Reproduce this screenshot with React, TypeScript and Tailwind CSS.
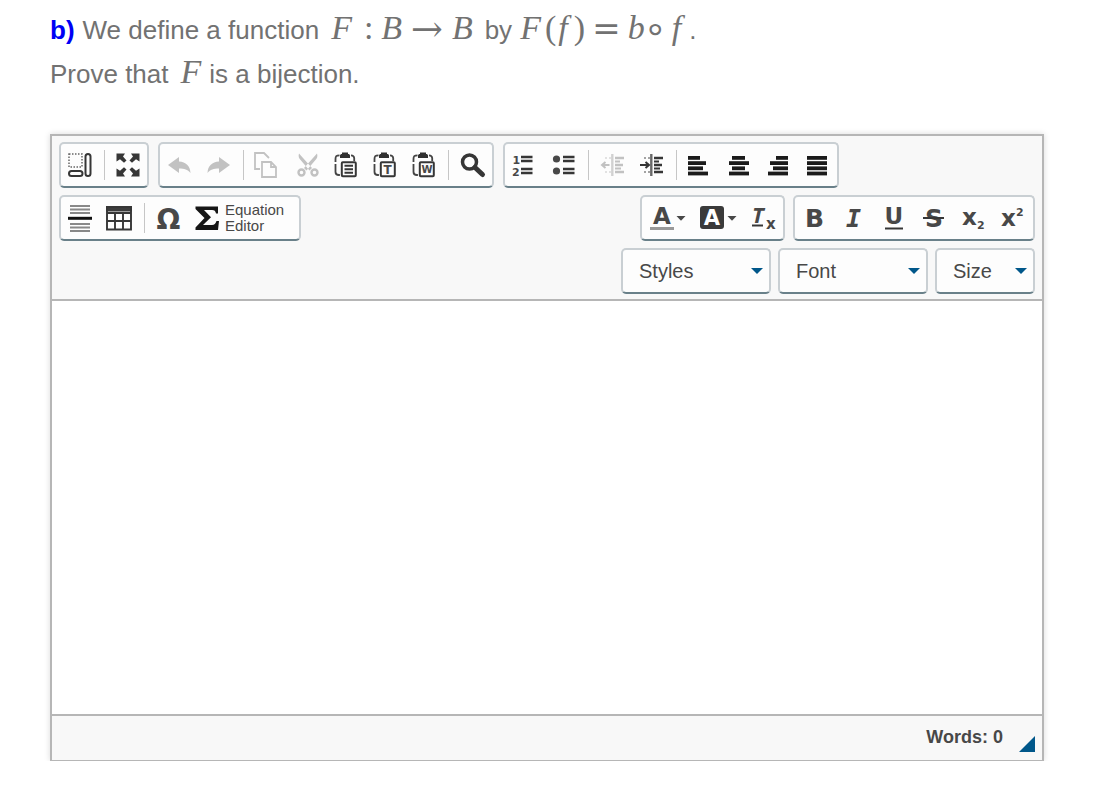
import React from 'react'

type Props = { children?: React.ReactNode; label?: string; className?: string; disabled?: boolean }

const Icon = ({ children }: Props) => (
  <svg viewBox="0 0 24 24" className="w-6 h-6 shrink-0 overflow-visible" fill="none" stroke="currentColor" strokeWidth="2" aria-hidden="true">
    {children}
  </svg>
)

// letters that sit inside an icon
const Letter = ({ x, y, className = '', children }: Props & { x: number; y: number }) => (
  <text x={x} y={y} fill="#484848" stroke="none" className={`font-['DejaVu_Sans',sans-serif] font-bold ${className}`}>
    {children}
  </text>
)

const Group = ({ children, className = '' }: Props) => (
  <div className={`flex h-[46px] items-center rounded-[5px] border-2 border-[#c9cfd3] border-b-[#698089] bg-[#fdfdfd] ${className}`}>
    {children}
  </div>
)

const Tool = ({ children, label, className = 'w-[39px] justify-center', disabled }: Props) => (
  <button
    type="button"
    aria-label={label}
    title={label}
    disabled={disabled}
    className={`flex h-full items-center text-[#363636] disabled:text-[#c2c2c2] ${className}`}
  >
    {children}
  </button>
)

const Separator = () => (
  <div className="flex w-[10px] justify-center">
    <div className="h-[30px] w-px bg-[#c6c6c6]" />
  </div>
)

const SmallCaret = () => (
  <svg viewBox="0 0 10 5" className="ml-0.5 h-[5px] w-[10px]" aria-hidden="true">
    <path d="M0.5 0h9L5 4.8z" fill="#484848" />
  </svg>
)

const Clipboard = ({ children }: Props) => (
  <Icon>
    <path d="M5.5 2.3C2.3 2.3 1.5 3.3 1.5 6v3M1.5 11v8c0 2.3.8 3 3.4 3h1M17 2.3c2.2 0 3 .6 3.2 2.7v3" stroke="#444" strokeWidth="1.8" />
    <path d="M6 5V2.6C6 1.6 6.8 1 8 1V-.5h6V1c1.3 0 2 .6 2 1.6V5z" fill="#303030" stroke="none" />
    <rect x="7.8" y="9.3" width="14" height="14" rx="1" strokeWidth="2" fill="#fdfdfd" />
    {children}
  </Icon>
)

const Lines = ({ rows }: { rows: number[][] }) => (
  <Icon>
    {rows.map(([x, w], i) => (
      <rect key={i} x={x} y={3 + i * 5.2} width={w} height="3.8" fill="#1b1b1b" stroke="none" />
    ))}
  </Icon>
)

const Indent = ({ children }: Props) => (
  <Icon>
    <path d="M11.3 1v22" strokeWidth="2.4" opacity="0.75" />
    <path d="M14 5h9M14 12h8M14 19h9" strokeWidth="2.4" />
    <path d="M14 8.5h5M14 15.5h6" strokeWidth="2" />
    <path d="M4 5h2M8 5h2M4 19h2M8 19h2" strokeWidth="1.6" opacity="0.6" />
    {children}
  </Icon>
)

const Dropdown = ({ label, className = '' }: Props) => (
  <div className={`relative h-[46px] ${className}`}>
    <select
      aria-label={label}
      className="h-full w-full appearance-none rounded-[5px] border-2 border-[#c9cfd3] border-b-[#698089] bg-[#fdfdfd] pl-4 pr-7 text-[20px] text-[#484848]"
    >
      <option>{label}</option>
    </select>
    <svg viewBox="0 0 12 6" className="pointer-events-none absolute right-2 top-5 h-[6px] w-[12px]" aria-hidden="true">
      <path d="M0 0h12L6 6z" fill="#00578a" />
    </svg>
  </div>
)

const Var = ({ children, className = '' }: Props) => (
  <span className={`font-['Liberation_Serif',serif] text-[34px] leading-none italic ${className}`}>{children}</span>
)

const Op = ({ children, className = '' }: Props) => (
  <span className={`font-['DejaVu_Math_TeX_Gyre','Liberation_Serif',serif] text-[34px] leading-none ${className}`}>{children}</span>
)

const Question = () => (
  <div className="text-[26px] text-[#727272]">
    <p className="flex h-11 items-baseline whitespace-pre">
      <b className="text-[#0000f5]">b)</b>
      <span className="ml-2">We define a function</span>
      <Var className="ml-3">F</Var>
      <Var className="ml-3 not-italic">:</Var>
      <Var className="ml-2">B</Var>
      <Op className="ml-2">→</Op>
      <Var className="ml-2">B</Var>
      <span className="ml-3">by</span>
      <Var className="ml-2">F</Var>
      <Var className="ml-1 not-italic">(</Var>
      <Var className="ml-0.5">f</Var>
      <Var className="ml-1.5 not-italic">)</Var>
      <Op className="ml-2">=</Op>
      <Var className="ml-2">b</Var>
      <Op className="ml-0.5">∘</Op>
      <Var className="ml-2">f</Var>
      <span className="ml-2">.</span>
    </p>
    <p className="flex h-11 items-baseline whitespace-pre">
      <span>Prove that</span>
      <Var className="ml-3">F</Var>
      <span className="ml-2">is a bijection.</span>
    </p>
  </div>
)

const App = () => {
  return (
    <main className="bg-white pl-[50px] pr-[75px] pt-[11px] font-['Liberation_Sans',Arial,sans-serif]">
      <Question />

      {/* editor */}
      <section className="mt-[35px] border-2 border-b border-[#b6b6b6] shadow-[0_0_6px_rgba(0,0,0,0.15)]">
        {/* toolbar */}
        <div className="flex flex-col gap-[7px] border-b-2 border-[#b6b6b6] bg-[#f8f8f8] px-[7px] pb-[5px] pt-1.5">
          <div className="flex gap-[9px]">
            <Group>
              <Tool label="Show blocks" className="w-[38px] justify-center">
                <Icon>
                  <rect x="1" y="1" width="13" height="13" stroke="#666" strokeWidth="1.5" strokeDasharray="1.5 1.5" />
                  <rect x="17.5" y="1" width="5" height="22" rx="2.5" strokeWidth="2" />
                  <rect x="1" y="18" width="13.5" height="5" rx="2.5" strokeWidth="2" />
                </Icon>
              </Tool>
              <Separator />
              <Tool label="Maximize" className="w-[38px] justify-center">
                <Icon>
                  <path d="M.5.5H9l-2 3 3.5 4L8 9.8l-4-3.5-3.5 2.2zM23.5.5H15l2 3-3.5 4L16 9.8l4-3.5 3.5 2.2zM.5 23.5H9l-2-3 3.5-4L8 14.2l-4 3.5-3.5-2.2zM23.5 23.5H15l2-3-3.5-4 2.5-2.3 4 3.5 3.5-2.2z" fill="currentColor" stroke="none" />
                </Icon>
              </Tool>
            </Group>

            <Group>
              <Tool label="Undo" disabled>
                <Icon>
                  <path d="M0 12 11 4v4.5c7 .5 11 4 11.5 11.5-3-3.5-6-4.5-11.5-4.500V20z" fill="currentColor" stroke="none" />
                </Icon>
              </Tool>
              <Tool label="Redo" disabled>
                <Icon>
                  <path d="M23 12 12 4v4.5C5 9 1 12.5.5 20c3-3.5 6-4.5 11.5-4.500V20z" fill="currentColor" stroke="none" />
                </Icon>
              </Tool>
              <Separator />
              <Tool label="Copy" disabled>
                <Icon>
                  <path d="M4 16h-5V0h9l5 5M6 9h9l5 5v10H6zM15 9v5h5" strokeWidth="1.8" />
                </Icon>
              </Tool>
              <Tool label="Cut" disabled>
                <Icon>
                  <path d="M4 .5c-1 3 0 5 2 7l8.5 10 2.5-2.5zM22 .5c1 3 0 5-2 7l-8.5 10L9 15z" fill="currentColor" stroke="none" />
                  <circle cx="6.5" cy="19.5" r="3" strokeWidth="2.4" />
                  <circle cx="19.5" cy="19.5" r="3" strokeWidth="2.4" />
                </Icon>
              </Tool>
              <Tool label="Paste">
                <Clipboard>
                  <path d="M10.5 12.8H19M10.5 16.3H19M10.5 19.8H19" strokeWidth="1.9" />
                </Clipboard>
              </Tool>
              <Tool label="Paste as plain text">
                <Clipboard>
                  <Letter x={10.5} y={20.5} className="text-[12px]">T</Letter>
                </Clipboard>
              </Tool>
              <Tool label="Paste from Word">
                <Clipboard>
                  <Letter x={9.5} y={20} className="text-[10px]">W</Letter>
                </Clipboard>
              </Tool>
              <Separator />
              <Tool label="Find">
                <Icon>
                  <circle cx="8.5" cy="9" r="7" strokeWidth="3.5" />
                  <path d="M14 14.5l7.5 7" strokeWidth="5" strokeLinecap="round" />
                </Icon>
              </Tool>
            </Group>

            <Group>
              <Tool label="Numbered list">
                <Icon>
                  <Letter x={-0.5} y={11} className="text-[11px]">1</Letter>
                  <Letter x={-1} y={23} className="text-[11px]">2</Letter>
                  <path d="M8 4h11.5M8 8h11.5M8 16h11.5M8 20h11.5" strokeWidth="2.4" />
                </Icon>
              </Tool>
              <Tool label="Bulleted list">
                <Icon>
                  <circle cx="4.5" cy="6" r="3.6" fill="#484848" stroke="none" />
                  <circle cx="4.5" cy="18" r="3.6" fill="#484848" stroke="none" />
                  <path d="M11 4h11.5M11 8h11.5M11 16h11.5M11 20h11.5" strokeWidth="2.4" />
                </Icon>
              </Tool>
              <Separator />
              <Tool label="Decrease indent" disabled>
                <Indent>
                  <path d="M8.5 12H1M4.5 9 1 12l3.5 3" strokeWidth="2" />
                </Indent>
              </Tool>
              <Tool label="Increase indent">
                <Indent>
                  <path d="M0 12h8M5.500 9 9 12l-3.5 3" strokeWidth="2" />
                </Indent>
              </Tool>
              <Separator />
              <Tool label="Align left"><Lines rows={[[-1, 12], [-1, 18], [-1, 15], [-1, 20]]} /></Tool>
              <Tool label="Center"><Lines rows={[[4, 13], [1, 20], [4, 13], [1, 20]]} /></Tool>
              <Tool label="Align right"><Lines rows={[[9, 12], [3, 18], [6, 15], [1, 20]]} /></Tool>
              <Tool label="Justify"><Lines rows={[[1, 20], [1, 20], [1, 20], [1, 20]]} /></Tool>
            </Group>
          </div>

          <div className="flex gap-2">
            <Group>
              <Tool label="Insert horizontal line">
                <Icon>
                  <path d="M1 0h20M1 3.5h20M1 7h20M1 18h20M1 21.5h20M1 25h20" strokeWidth="1.8" stroke="#888" />
                  <path d="M-1 12.3h24" strokeWidth="3" stroke="#111" />
                </Icon>
              </Tool>
              <Tool label="Table">
                <Icon>
                  <path d="M-2 0h26v5.5H-2z" fill="#3c3c3c" stroke="none" />
                  <path d="M-1 1h24v22.5H-1zM-1 7h24M-1 15h24M7 6v17M15 6v17" strokeWidth="1.9" />
                </Icon>
              </Tool>
              <Separator />
              <Tool label="Insert special character">
                <Icon>
                  <Letter x={-0.5} y={22.5} className="text-[28px]">Ω</Letter>
                </Icon>
              </Tool>
              <Tool className="w-[111px] gap-1.5 pl-[7px]">
                <Icon>
                  <path d="M.5.5H23v7h-2C20.5 5 19.5 4 17 4H9l7 7.2L8 19h9c2.5 0 3.5-1.5 4.5-4H24l-1 9H.5v-2.5l9-9.500-9-9z" fill="#161616" stroke="none" />
                </Icon>
                <span className="text-left text-[15px] leading-4 text-[#484848]">Equation<br />Editor</span>
              </Tool>
            </Group>

            <Group className="ml-auto">
              <Tool label="Text color" className="w-[51px] pl-2">
                <Icon>
                  <Letter x={3} y={18} className="text-[23px]">A</Letter>
                  <path d="M0 22.5h24" strokeWidth="3" stroke="#999" />
                </Icon>
                <SmallCaret />
              </Tool>
              <Tool label="Background color" className="w-[51px] pl-2">
                <Icon>
                  <rect x="-1" y="0" width="24" height="23" rx="3" fill="#3a3a3a" stroke="none" />
                  <text x="11" y="19" textAnchor="middle" fill="#fff" stroke="none" className="font-['DejaVu_Sans',sans-serif] text-[21px] font-bold">A</text>
                </Icon>
                <SmallCaret />
              </Tool>
              <Tool label="Remove format">
                <Icon>
                  <text x="0" y="17" fill="#484848" stroke="none" className="font-['Open_Sans',sans-serif] text-[22px] font-bold italic">T</text>
                  <Letter x={14} y={23} className="text-[15px]">x</Letter>
                  <path d="M0 19.5h11" strokeWidth="2" />
                </Icon>
              </Tool>
            </Group>

            <Group className="px-0.5">
              <Tool label="Bold">
                <Icon>
                  <Letter x={0} y={21} className="text-[25px]">B</Letter>
                </Icon>
              </Tool>
              <Tool label="Italic">
                <Icon>
                  <text x="2" y="21" fill="#484848" stroke="none" className="font-['DejaVu_Sans_Mono',monospace] text-[25px] font-bold italic">I</text>
                </Icon>
              </Tool>
              <Tool label="Underline">
                <Icon>
                  <Letter x={1.5} y={18} className="text-[23px]">U</Letter>
                  <path d="M2 22.5h18" strokeWidth="2" />
                </Icon>
              </Tool>
              <Tool label="Strikethrough">
                <Icon>
                  <Letter x={3} y={21} className="text-[25px]">S</Letter>
                  <path d="M1 12h21" strokeWidth="2" />
                </Icon>
              </Tool>
              <Tool label="Subscript">
                <Icon>
                  <Letter x={1} y={19} className="text-[23px]">x</Letter>
                  <Letter x={16} y={23} className="text-[11px]">2</Letter>
                </Icon>
              </Tool>
              <Tool label="Superscript">
                <Icon>
                  <Letter x={1} y={20} className="text-[23px]">x</Letter>
                  <Letter x={16} y={10} className="text-[11px]">2</Letter>
                </Icon>
              </Tool>
            </Group>
          </div>

          <div className="flex justify-end gap-[7px]">
            <Dropdown label="Styles" className="w-[150px]" />
            <Dropdown label="Font" className="w-[150px]" />
            <Dropdown label="Size" className="w-[100px]" />
          </div>
        </div>

        <textarea aria-label="Answer" className="block h-[413px] w-full resize-none bg-white p-4 text-[20px] outline-none" />

        {/* status bar */}
        <div className="flex h-[46px] items-center justify-end gap-4 border-t-2 border-[#b6b6b6] bg-[#f8f8f8] pr-[7px] text-[18px] font-bold text-[#484848]">
          <span className="pb-0.5">Words: 0</span>
          <svg viewBox="0 0 16 16" className="mb-2 h-4 w-4 self-end" aria-hidden="true">
            <path d="M16 0v16H0z" fill="#00578a" />
          </svg>
        </div>
      </section>
    </main>
  )
}

export default App
